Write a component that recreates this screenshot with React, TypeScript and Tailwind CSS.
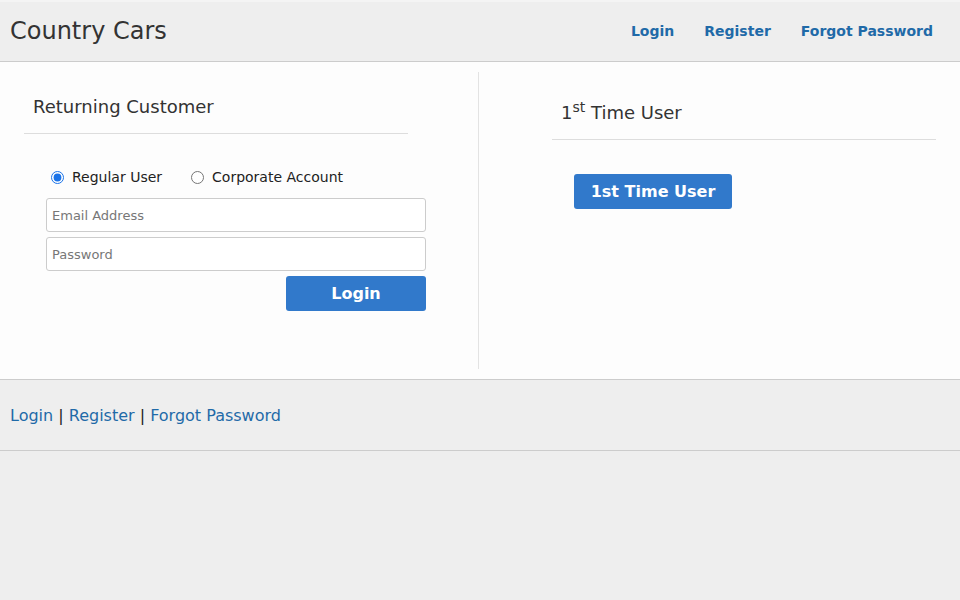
import React from "react";

const font = { fontFamily: '"DejaVu Sans", Verdana, sans-serif' };

export default function App() {
  return (
    <div className="min-h-[600px] bg-[#eeeeee] text-[#333333]" style={font}>
      {/* Top bar */}
      <header className="flex h-[62px] items-center justify-between border-t-2 border-b border-t-[#f4f4f4] border-b-[#cccccc] bg-[#eeeeee] px-[10px]">
        <div className="pb-[1px] text-[24px] leading-none text-[#333333]">Country Cars</div>
        <nav className="flex items-center gap-[30px] pr-[17px] text-[14px] font-bold text-[#1f6aa8]">
          <a href="#">Login</a>
          <a href="#">Register</a>
          <a href="#">Forgot Password</a>
        </nav>
      </header>

      {/* Main panels */}
      <main className="flex border-b border-[#cccccc] bg-[#fdfdfd] py-[10px]">
        <section className="h-[297px] w-[479px] border-r border-[#e3e3e3]">
          <div className="ml-[24px] w-[384px] border-b border-[#dddddd] pb-[15px] pl-[9px] pt-[24px]">
            <h2 className="text-[18px] leading-[22px] text-[#333333]">Returning Customer</h2>
          </div>
          <form className="ml-[46px] mt-[33px] w-[380px]">
            <div className="flex items-center pl-[5px] text-[14px] text-[#222222]">
              <label className="flex items-center">
                <input type="radio" name="acct" defaultChecked className="m-0 h-[13px] w-[13px] accent-[#1a73e8]" />
                <span className="ml-[8px]">Regular User</span>
              </label>
              <label className="ml-[29px] flex items-center">
                <input type="radio" name="acct" className="m-0 h-[13px] w-[13px]" />
                <span className="ml-[8px]">Corporate Account</span>
              </label>
            </div>
            <input
              type="text"
              placeholder="Email Address"
              className="mt-[10px] block h-[34px] w-[380px] rounded-[3px] border border-[#cccccc] bg-white px-[5px] text-[13px] placeholder:text-[#777777]"
            />
            <input
              type="password"
              placeholder="Password"
              className="mt-[5px] block h-[34px] w-[380px] rounded-[3px] border border-[#cccccc] bg-white px-[5px] text-[13px] placeholder:text-[#777777]"
            />
            <div className="mt-[5px] flex justify-end">
              <button
                type="button"
                className="h-[35px] w-[140px] rounded-[3px] bg-[#3179cb] text-[16px] font-bold text-white"
              >
                Login
              </button>
            </div>
          </form>
        </section>

        <section className="h-[297px] flex-1">
          <div className="ml-[73px] w-[384px] border-b border-[#dddddd] pb-[13px] pl-[9px] pt-[28px]">
            <h2 className="text-[18px] leading-[26px] text-[#333333]">
              1<sup className="text-[14px]">st</sup> Time User
            </h2>
          </div>
          <div className="ml-[95px] mt-[34px]">
            <button
              type="button"
              className="h-[35px] w-[158px] rounded-[3px] bg-[#3179cb] text-[16px] font-bold text-white"
            >
              1st Time User
            </button>
          </div>
        </section>
      </main>

      {/* Footer links */}
      <footer className="flex h-[71px] items-center border-b border-[#cccccc] px-[10px] pt-[2px] text-[16px] text-[#222222]">
        <p>
          <a href="#" className="text-[#1f6aa8]">Login</a> | <a href="#" className="text-[#1f6aa8]">Register</a> |{" "}
          <a href="#" className="text-[#1f6aa8]">Forgot Password</a>
        </p>
      </footer>
    </div>
  );
}
